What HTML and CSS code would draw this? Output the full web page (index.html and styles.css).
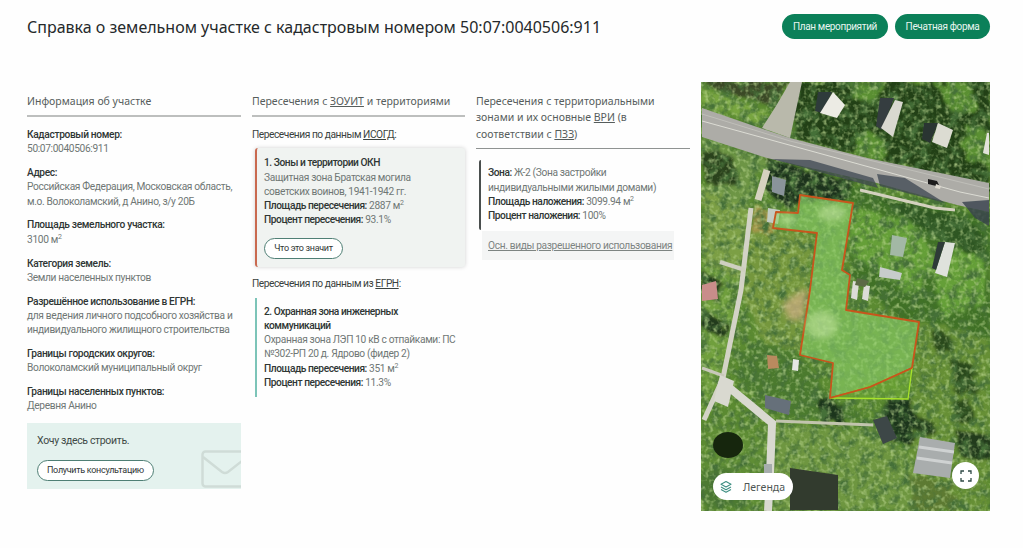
FILE: index.html
```html
<!DOCTYPE html>
<html lang="ru">
<head>
    <meta charset="UTF-8">
    <meta name="viewport" content="width=device-width, initial-scale=1.0">
    <title>Справка о земельном участке</title>
    <link rel="stylesheet" href="styles.css">
</head>
<body>

<header class="top">
    <h1>Справка о земельном участке с кадастровым номером 50:07:0040506:911</h1>
    <div class="top-actions">
        <a href="#" class="btn-green">План мероприятий</a>
        <a href="#" class="btn-green">Печатная форма</a>
    </div>
</header>

<main class="report">
    <section class="col">
        <h2 class="col-title">Информация об участке</h2>
        <dl class="facts">
            <div><dt>Кадастровый номер:</dt><dd>50:07:0040506:911</dd></div>
            <div><dt>Адрес:</dt><dd>Российская Федерация, Московская область, м.о. Волоколамский, д Анино, з/у 20Б</dd></div>
            <div><dt>Площадь земельного участка:</dt><dd>3100 м<sup>2</sup></dd></div>
            <div><dt>Категория земель:</dt><dd>Земли населенных пунктов</dd></div>
            <div><dt>Разрешённое использование в ЕГРН:</dt><dd>для ведения личного подсобного хозяйства и индивидуального жилищного строительства</dd></div>
            <div><dt>Границы городских округов:</dt><dd>Волоколамский муниципальный округ</dd></div>
            <div><dt>Границы населенных пунктов:</dt><dd>Деревня Анино</dd></div>
        </dl>
        <div class="promo">
            <p>Хочу здесь строить.</p>
            <a href="#" class="btn-outline">Получить консультацию</a>
            <svg class="promo-mail" width="48" height="38" viewBox="0 0 48 38" fill="none" stroke="#cfdcd7" stroke-width="2.5">
                <rect x="1.5" y="1.5" width="45" height="35" rx="3"/>
                <path d="M2 7l19 15q3 2 6 0l19-15"/>
            </svg>
        </div>
    </section>

    <section class="col">
        <h2 class="col-title">Пересечения с <u>ЗОУИТ</u> и территориями</h2>
        <h3 class="sub">Пересечения по данным <u>ИСОГД</u>:</h3>
        <div class="zone zone-red">
            <b>1. Зоны и территории ОКН</b><br>
            Защитная зона Братская могила советских воинов, 1941-1942 гг.<br>
            <b>Площадь пересечения:</b> 2887 м<sup>2</sup><br>
            <b>Процент пересечения:</b> 93.1%
            <a href="#" class="btn-outline zone-btn">Что это значит</a>
        </div>
        <h3 class="sub sub-next">Пересечения по данным из <u>ЕГРН</u>:</h3>
        <div class="zone zone-teal">
            <b>2. Охранная зона инженерных коммуникаций</b><br>
            Охранная зона ЛЭП 10 кВ с отпайками: ПС №302-РП 20 д. Ядрово (фидер 2)<br>
            <b>Площадь пересечения:</b> 351 м<sup>2</sup><br>
            <b>Процент пересечения:</b> 11.3%
        </div>
    </section>

    <section class="col">
        <h2 class="col-title col-title-thin">Пересечения с территориальными<br>зонами и их основные <u>ВРИ</u> (в<br>соответствии с <u>ПЗЗ</u>)</h2>
        <div class="zone-dark">
            <b>Зона:</b> Ж-2 (Зона застройки<br>индивидуальными жилыми домами)<br>
            <b>Площадь наложения:</b> 3099.94 м<sup>2</sup><br>
            <b>Процент наложения:</b> 100%
        </div>
        <a href="#" class="vri-link">Осн. виды разрешенного использования</a>
    </section>

    <section class="map">
        <svg class="map-img" viewBox="701 82 289 429" preserveAspectRatio="none">
            <defs>
                <filter id="rough" x="-5%" y="-5%" width="110%" height="110%">
                    <feTurbulence type="fractalNoise" baseFrequency="0.08" numOctaves="3" seed="4"/>
                    <feDisplacementMap in="SourceGraphic" scale="18"/>
                    <feGaussianBlur stdDeviation="1.4"/>
                </filter>
                <filter id="mottle" x="0" y="0" width="100%" height="100%">
                    <feTurbulence type="fractalNoise" baseFrequency="0.1" numOctaves="3" seed="9"/>
                    <feColorMatrix values="0 0 0 0 0.06  0 0 0 0 0.16  0 0 0 0 0.04  3 0 0 0 -1.3"/>
                    <feGaussianBlur stdDeviation="0.6"/>
                </filter>
                <filter id="grain" x="0" y="0" width="100%" height="100%">
                    <feTurbulence type="fractalNoise" baseFrequency="0.22" numOctaves="2" seed="3"/>
                    <feColorMatrix values="0 0 0 0 0.5  0 0 0 0 0.68  0 0 0 0 0.28  1.8 0 0 0 -0.85"/>
                    <feGaussianBlur stdDeviation="0.5"/>
                </filter>
                <filter id="soft"><feGaussianBlur stdDeviation="0.5"/></filter>
                <filter id="patch"><feGaussianBlur stdDeviation="3"/></filter>
            </defs>

            <rect x="701" y="82" width="289" height="429" fill="#5b8a31"/>

            <!-- растительность -->
            <g filter="url(#rough)">
                <path d="M790 82H990V190L870 158 795 138Z" fill="#203f17"/>
                <path d="M850 83h36l-6 20-26-3zM935 84h35l6 30-26-4zM965 125l25 8v34l-25-8zM862 125l24 18-8 20-24-10z" fill="#5a8f33"/>
                <path d="M702 82H790L776 106 718 90Z" fill="#3b4a26"/>
                <path d="M702 88L770 113 757 124 702 104Z" fill="#78a53f"/>
                <path d="M702 138L767 160 745 205 702 190Z" fill="#6d9544"/>
                <path d="M702 150l30 6 8 28-38-2z" fill="#2b431d"/>
                <path d="M702 190L750 205 742 280 702 262Z" fill="#7b9f45"/>
                <path d="M770 170L990 215V350L925 340 850 275 860 205Z" fill="#3f7128"/>
                <path d="M850 205l60 15 30 45-30 30-60-40zM930 260l55-20v60l-40 20z" fill="#659f39"/>
                <path d="M767 160l90 22-15 18-60 5-16-15z" fill="#1d331b"/>
                <path d="M880 200l70 14 30 14 8 30-34-10-40-24z" fill="#2d5720"/>
                <path d="M757 205l20 8-4 20-22 0z" fill="#a3954a"/>
                <path d="M748 232L812 236 802 350 765 345 745 300Z" fill="#75973e"/>
                <path d="M702 262l35 18-10 32-25-6zM702 290l36 22-14 60-22 45z" fill="#6f9f3d"/>
                <path d="M702 270l22 14-6 18-16-8zM702 310l28 14-6 12-22-8z" fill="#243a1a"/>
                <path d="M920 320L990 340V510H920L905 440 915 380Z" fill="#668f36"/>
                <path d="M950 360l24 4 3 26-24 2zM952 400l20 0 2 20-20 4zM930 330l20 5 4 18-18 2z" fill="#2b4a1d"/>
                <path d="M955 430l35 5v25l-30-5zM915 413l20 10-6 15-16-6z" fill="#223a1b"/>
                <path d="M745 340l55 15 30 42 45 25-100-6-40-40z" fill="#4b7a2f"/>
                <path d="M815 395l30 10 0 20-22 0zM880 400l32-2 5 42-30 4z" fill="#1f351a"/>
                <path d="M775 425L875 428 915 460 912 511H775Z" fill="#6e963f"/>
                <path d="M710 425l55 8 5 78H703Z" fill="#5f8d36"/>
                <path d="M703 470h30l10 40h-40z" fill="#4e7a31"/>
                <path d="M913 475l42 4-4 32h-42z" fill="#5d7a30"/>
            </g>
            <rect x="701" y="82" width="289" height="429" filter="url(#mottle)"/>
            <rect x="701" y="82" width="289" height="429" filter="url(#grain)"/>

            <!-- дороги -->
            <g filter="url(#soft)">
                <path d="M790 82H802L790 138 762 128 776 106Z" fill="#b9b9ab"/>
                <path d="M702 108L757 127 790 138 867 158 989 183V212L957 205 873 182 767 158 702 137Z" fill="#adaca7"/>
                <path d="M702 121L960 192 989 198" fill="none" stroke="#dcdcd4" stroke-width="1"/>
                <path d="M702 114L790 141 989 189" fill="none" stroke="#cbcbc4" stroke-width=".6"/>
                <path d="M772 159L810 160 873 178 878 188Z" fill="#3c4650" opacity=".75"/>
                <path d="M877 174L905 178 945 203 880 186Z" fill="#3c4650" opacity=".75"/>
                <path d="M962 202L989 200V226L975 218Z" fill="#37424c" opacity=".8"/>
                <path d="M860 190L935 208 955 210" fill="none" stroke="#d4d1bf" stroke-width="3"/>
                <path d="M767 170L758 200" fill="none" stroke="#d6d2c0" stroke-width="7"/>
                <path d="M751 208L741 290 723 378 704 420" fill="none" stroke="#d3d3c6" stroke-width="5"/>
                <path d="M702 368L724 376" fill="none" stroke="#c8c8ba" stroke-width="3"/>
                <path d="M720 380L772 423 770 475 768 511" fill="none" stroke="#d9d9d0" stroke-width="8"/>
                <path d="M720 375l14 6-6 26-14-6z" fill="#d9d9d0"/>
                <path d="M776 421L873 425" fill="none" stroke="#c2c4ae" stroke-width="3"/>
                <path d="M720 262L745 270" fill="none" stroke="#cfcfc0" stroke-width="4"/>
            </g>

            <!-- дома -->
            <g filter="url(#soft)">
                <path d="M818 92l14 0-10 21-7-2z" fill="#2f3a3a"/>
                <path d="M833 92l12 13-8 13-17-5z" fill="#ecebe4"/>
                <path d="M880 98l14 0-12 32-6-4z" fill="#343e3f"/>
                <path d="M895 100l8 2-10 35-12-9z" fill="#d9d8d0"/>
                <path d="M924 123l14 0-8 20-8-4z" fill="#2b3533"/>
                <path d="M938 123l15 7-6 18-15-6z" fill="#dcdcd2"/>
                <path d="M987 133l2 0v22l-6-2z" fill="#e2e2da"/>
                <path d="M892 235l15 3-4 19-13-2z" fill="#a3b8a5"/>
                <path d="M945 242l10 1-8 34-12-4z" fill="#dfe2dc"/>
                <path d="M938 242l7 0-9 28-4-2z" fill="#2e3a38"/>
                <path d="M880 267l22 6-2 7-21-3z" fill="#c7cccb"/>
                <path d="M853 281l6 1-2 18-6-2zM864 285l6 1-2 15-6-2z" fill="#dcdcd6"/>
                <path d="M857 278l12 3-4 6-10-2z" fill="#5c6b45"/>
                <path d="M768 208l12 2-2 14-11-2z" fill="#c3ccc4"/>
                <path d="M702 285l14-4 2 18-16 2z" fill="#c98d8a"/>
                <path d="M767 355l10 1 2 12-11 1z" fill="#b98a5e"/>
                <path d="M793 359l6 1-1 11-6-1z" fill="#e5e8e4"/>
                <path d="M765 395l26 6-2 14-24-7z" fill="#66707a"/>
                <path d="M873 420l14-4 10 22-14 6z" fill="#3c4646"/>
                <path d="M920 437l35 6-5 35-37-5z" fill="#a9adad"/>
                <path d="M919 447l35 5M917 458l35 5" stroke="#cfd2d2" stroke-width="3"/>
                <path d="M790 468l48 7v35h-48z" fill="#333a2f"/>
                <path d="M764 464h8v18h-8z" fill="#a6adad"/>
                <path d="M928 179l9 2 3 6-12-3z" fill="#1a1a1c"/>
                <path d="M936 184l5 2-1 3-5-1z" fill="#dedad0"/>
                <path d="M772 176l14 4-2 16-12-4z" fill="#8a949a"/>
            </g>

            <ellipse cx="728" cy="445" rx="15" ry="13" fill="#16280f" filter="url(#soft)"/>
            <path d="M782 305q14-14 26-16l-4 30-14 2z" fill="#c7ae7c" opacity=".8" filter="url(#patch)"/>

            <!-- контур участка -->
            <path d="M800 195L853 203 842 270 850 275 846 310 919 322 912 368 870 387 830 398 833 363 800 355 810 290 817 233 773 228 776 212 798 213Z" fill="#8dd26a" fill-opacity=".58" stroke="#c8551c" stroke-width="1.8" stroke-linejoin="round"/>
            <g fill="#c4e5a0" opacity=".55" filter="url(#patch)">
                <ellipse cx="832" cy="213" rx="14" ry="8"/>
                <ellipse cx="787" cy="220" rx="8" ry="5"/>
                <ellipse cx="822" cy="325" rx="16" ry="14"/>
            </g>
            <path d="M830 398L908 399 912 368" fill="#7fc23a" fill-opacity=".35" stroke="#a8e32a" stroke-width="1.3"/>
            <path d="M912 368L870 387 830 398" fill="none" stroke="#c8551c" stroke-width="1.8"/>
        </svg>

        <button class="legend" type="button">
            <svg width="14" height="14" viewBox="0 0 14 14" fill="none" stroke="#3f8f83" stroke-width="1.1" stroke-linejoin="round">
                <path d="M7 1.5l5 2.7-5 2.7-5-2.7z"/>
                <path d="M2 7l5 2.7L12 7"/>
                <path d="M2 9.6l5 2.7 5-2.7"/>
            </svg>
            <span>Легенда</span>
        </button>
        <button class="expand" type="button" aria-label="На весь экран">
            <svg width="12" height="12" viewBox="0 0 12 12" fill="none" stroke="#2f4a45" stroke-width="1.3">
                <path d="M1 4V1h3M8 1h3v3M11 8v3H8M4 11H1V8"/>
            </svg>
        </button>
    </section>
</main>

</body>
</html>
```

FILE: styles.css
```css
* {
    box-sizing: border-box;
}
html, body {
    height: 100%;
}
body {
    margin: 0;
    background-color: #fefefe;
    color: #6f7775;
    font-family: Roboto, Arial, sans-serif;
    font-size: 10.2px;
    line-height: 14.3px;
    letter-spacing: -0.35px;
    overflow: hidden;
}
b {
    color: #2f3634;
    font-weight: 500;
    letter-spacing: -0.45px;
}
u {
    text-underline-offset: 1px;
}
sup {
    font-size: 7px;
    line-height: 0;
}
a {
    text-decoration: none;
}
.top {
    display: flex;
    justify-content: space-between;
    align-items: center;
    padding: 14px 33px 0 27px;
}
.top h1 {
    margin: 0;
    color: #25292b;
    font-family: "Noto Sans", Arial, sans-serif;
    font-size: 16px;
    font-weight: 400;
    line-height: 24px;
    letter-spacing: 0;
}
.top-actions {
    display: flex;
    gap: 7px;
}
.btn-green {
    display: block;
    width: 106px;
    height: 25px;
    background-color: #0b8059;
    border-radius: 13px;
    color: #e8f5f0;
    font-size: 10px;
    line-height: 25px;
    text-align: center;
    white-space: nowrap;
}
.btn-green + .btn-green {
    width: 95px;
}
.report {
    display: grid;
    grid-template-columns: 214px 213px 214px 289px;
    column-gap: 11px;
    padding: 43px 33px 0 27px;
}
.col {
    padding-top: 12px;
}
.col-title {
    margin: 0 0 11px;
    padding-bottom: 6px;
    border-bottom: 2px solid #bdbfbe;
    color: #565d5c;
    font-family: "Noto Sans", Arial, sans-serif;
    font-size: 10.5px;
    font-weight: 400;
    line-height: 15px;
    letter-spacing: 0;
}
.col-title-thin {
    margin: -1px 0 11px;
    padding-bottom: 6px;
    border-bottom: 1px solid #8f9392;
    line-height: 16.4px;
}
.facts {
    margin: 0;
}
.facts div {
    margin-bottom: 9.5px;
}
.facts dt {
    color: #2f3634;
    font-weight: 500;
}
.facts dd {
    margin: 0;
}
.promo {
    position: relative;
    height: 66px;
    padding: 11px 10px;
    background-color: #e4f2ee;
    overflow: hidden;
}
.promo p {
    margin: 0 0 11px;
    color: #3f4a47;
    font-size: 10.5px;
}
.promo-mail {
    position: absolute;
    left: 174px;
    top: 27px;
}
.btn-outline {
    display: inline-block;
    height: 21px;
    padding: 0 9px;
    background-color: #fff;
    border: 1px solid #4f7f75;
    border-radius: 11px;
    color: #2f3634;
    font-size: 9px;
    line-height: 19px;
    letter-spacing: -0.3px;
}
.sub {
    margin: 0 0 6px;
    color: #3a4240;
    font-size: 10.2px;
    font-weight: 400;
    line-height: 14.3px;
    letter-spacing: -0.45px;
}
.sub-next {
    margin-top: 10px;
}
.zone {
    margin-left: 3px;
    padding: 7px 8px 7px 7px;
    border-left: 2px solid #7cc4b8;
}
.zone-red {
    height: 119px;
    padding-top: 8px;
    background-color: #f0f3f1;
    border-left: 2px solid #c9694f;
    border-radius: 3px;
    box-shadow: 0 0 4px rgba(0, 0, 0, 0.18);
}
.zone-btn {
    display: block;
    width: 79px;
    margin-top: 10px;
    padding: 0;
    text-align: center;
}
.zone-dark {
    margin-left: 3px;
    padding: 6px 8px 7px 7px;
    border-left: 2px solid #4a4f4e;
    border-radius: 2px;
}
.vri-link {
    display: block;
    width: 192px;
    height: 29px;
    margin: 1px 0 0 6px;
    padding-left: 6px;
    background-color: #f4f5f5;
    color: #7d8482;
    line-height: 29px;
    text-decoration: underline;
    white-space: nowrap;
}
.map {
    position: relative;
    height: 429px;
}
.map-img {
    display: block;
    width: 289px;
    height: 429px;
}
.legend {
    position: absolute;
    left: 12px;
    top: 391px;
    display: flex;
    align-items: center;
    gap: 10px;
    width: 80px;
    height: 27px;
    padding: 0 0 0 6px;
    background-color: #fff;
    border: none;
    border-radius: 14px;
    color: #4e5654;
    font-family: "Noto Sans", Arial, sans-serif;
    font-size: 10.5px;
}
.expand {
    position: absolute;
    left: 251px;
    top: 380px;
    display: flex;
    align-items: center;
    justify-content: center;
    width: 27px;
    height: 27px;
    padding: 0;
    background-color: #fff;
    border: none;
    border-radius: 50%;
}
```
